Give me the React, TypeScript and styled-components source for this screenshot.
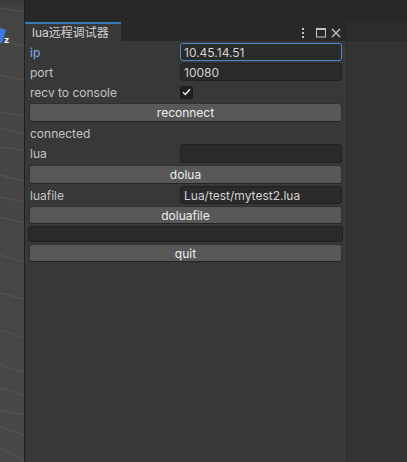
import React from "react";
import styled, { createGlobalStyle } from "styled-components";

const Global = createGlobalStyle`
  html, body { margin: 0; padding: 0; background: #282828; }
  #root { width: 407px; height: 462px; }
  * { box-sizing: border-box; }
`;

const Screen = styled.div`
  width: 407px;
  height: 462px;
  display: flex;
  overflow: hidden;
  font-family: Inter, "Noto Sans CJK SC", sans-serif;
  font-size: 12px;
`;

const Scene = styled.div`
  position: relative;
  width: 24px;
  height: 100%;
  background: linear-gradient(#3c3c3c 0px, #454545 20px, #474747 100%);
  flex: none;
`;

const SceneArt = styled.svg`
  position: absolute;
  inset: 0;
`;

const Divider = styled.div`
  width: 1px;
  background: #202020;
  flex: none;
`;

const Main = styled.div`
  flex: 1;
  display: flex;
  flex-direction: column;
`;

const TopStrip = styled.div`
  height: 22px;
  background: #282828;
  flex: none;
`;

const Body = styled.div`
  flex: 1;
  display: flex;
`;

const Panel = styled.div`
  width: 322px;
  display: flex;
  flex-direction: column;
  background: #383838;
  border-right: 1px solid #2b2b2b;
  flex: none;
`;

const Side = styled.div`
  flex: 1;
  background: linear-gradient(#2c2c2c 0 19px, #333333 19px);
`;

const Header = styled.div`
  height: 19px;
  display: flex;
  align-items: stretch;
  background: #282828;
  flex: none;
`;

const Tab = styled.div`
  width: 96px;
  background: #383838;
  border-top: 2px solid #3a79bb;
  color: #d2d2d2;
  padding-left: 7px;
  display: flex;
  align-items: center;
  line-height: 1;
`;

const HeaderIcons = styled.div`
  flex: 1;
  display: flex;
  justify-content: flex-end;
  align-items: center;
  gap: 4px;
  padding-right: 5px;
  padding-top: 2px;
`;

const Content = styled.div`
  display: flex;
  flex-direction: column;
  gap: 2px;
  padding: 2px 4px 0 4px;
`;

const Row = styled.div<{ $h: number }>`
  height: ${(p) => p.$h}px;
  display: flex;
  align-items: center;
`;

const Label = styled.div<{ $active?: boolean; $wide?: boolean }>`
  width: ${(p) => (p.$wide ? "auto" : "151px")};
  padding-left: 1px;
  color: ${(p) => (p.$active ? "#7eaef0" : "#c4c4c4")};
  white-space: nowrap;
  flex: none;
`;

const Field = styled.div<{ $focused?: boolean; $full?: boolean }>`
  flex: 1;
  height: 100%;
  margin: ${(p) => (p.$full ? "0 -1px" : "0")};
  background: #2a2a2a;
  border: 1px solid ${(p) => (p.$focused ? "#4a88d0" : "#212121")};
  border-radius: 3px;
  color: #d2d2d2;
  padding-left: 3px;
  display: flex;
  align-items: center;
  white-space: nowrap;
`;

const Button = styled.div`
  flex: 1;
  height: 100%;
  background: #585858;
  border: 1px solid #303030;
  border-bottom-color: #242424;
  border-radius: 3px;
  color: #eeeeee;
  display: flex;
  align-items: center;
  justify-content: center;
`;

const Check = styled.div`
  width: 13px;
  height: 13px;
  background: #202020;
  border: 1px solid #1a1a1a;
  border-radius: 2px;
  display: flex;
  align-items: center;
  justify-content: center;
`;

const lines = [
  [8, 12], [40, 46], [75, 80], [112, 116], [128, 134], [147, 150], [175, 181],
  [197, 202], [217, 223], [255, 262], [293, 299], [330, 338], [365, 372],
  [388, 395], [410, 415], [427, 435], [448, 460],
];

export default function App() {
  return (
    <>
      <Global />
      <Screen>
        <Scene>
          <SceneArt width="24" height="462" viewBox="0 0 24 462">
            {lines.map(([a, b], i) => (
              <line key={i} x1="0" y1={a} x2="24" y2={b} stroke="#565656" strokeWidth="1" />
            ))}
            <path d="M0 28 L6 30 L2 43 L0 43 Z" fill="#3d7be0" />
            <text x="4" y="43" fill="#ffffff" fontSize="9" fontWeight="700" fontFamily="Inter, sans-serif">z</text>
          </SceneArt>
        </Scene>
        <Divider />
        <Main>
          <TopStrip />
          <Body>
            <Panel>
              <Header>
                <Tab>lua远程调试器</Tab>
                <HeaderIcons>
                  <svg width="4" height="10" viewBox="0 0 4 10">
                    <rect x="1" y="0" width="2" height="2" fill="#c4c4c4" />
                    <rect x="1" y="4" width="2" height="2" fill="#c4c4c4" />
                    <rect x="1" y="8" width="2" height="2" fill="#c4c4c4" />
                  </svg>
                  <svg width="12" height="10" viewBox="0 0 12 10" style={{ marginLeft: 6 }}>
                    <rect x="1.5" y="0.5" width="9" height="8.5" fill="none" stroke="#c4c4c4" />
                    <rect x="1" y="0" width="10" height="2" fill="#c4c4c4" />
                  </svg>
                  <svg width="10" height="10" viewBox="0 0 10 10">
                    <path d="M1 1 L9 9 M9 1 L1 9" stroke="#c4c4c4" strokeWidth="1.4" />
                  </svg>
                </HeaderIcons>
              </Header>
              <Content>
                <Row $h={18}>
                  <Label $active>ip</Label>
                  <Field $focused>10.45.14.51</Field>
                </Row>
                <Row $h={18}>
                  <Label>port</Label>
                  <Field>10080</Field>
                </Row>
                <Row $h={18}>
                  <Label>recv to console</Label>
                  <Check>
                    <svg width="9" height="8" viewBox="0 0 9 8">
                      <path d="M1 4.2 L3.4 6.5 L8 1.3" fill="none" stroke="#f0f0f0" strokeWidth="1.5" />
                    </svg>
                  </Check>
                </Row>
                <Row $h={19}>
                  <Button>reconnect</Button>
                </Row>
                <Row $h={18}>
                  <Label $wide>connected</Label>
                </Row>
                <Row $h={19}>
                  <Label>lua</Label>
                  <Field></Field>
                </Row>
                <Row $h={19}>
                  <Button>dolua</Button>
                </Row>
                <Row $h={18}>
                  <Label>luafile</Label>
                  <Field>Lua/test/mytest2.lua</Field>
                </Row>
                <Row $h={18}>
                  <Button>doluafile</Button>
                </Row>
                <Row $h={16}>
                  <Field $full></Field>
                </Row>
                <Row $h={18}>
                  <Button>quit</Button>
                </Row>
              </Content>
            </Panel>
            <Side />
          </Body>
        </Main>
      </Screen>
    </>
  );
}
